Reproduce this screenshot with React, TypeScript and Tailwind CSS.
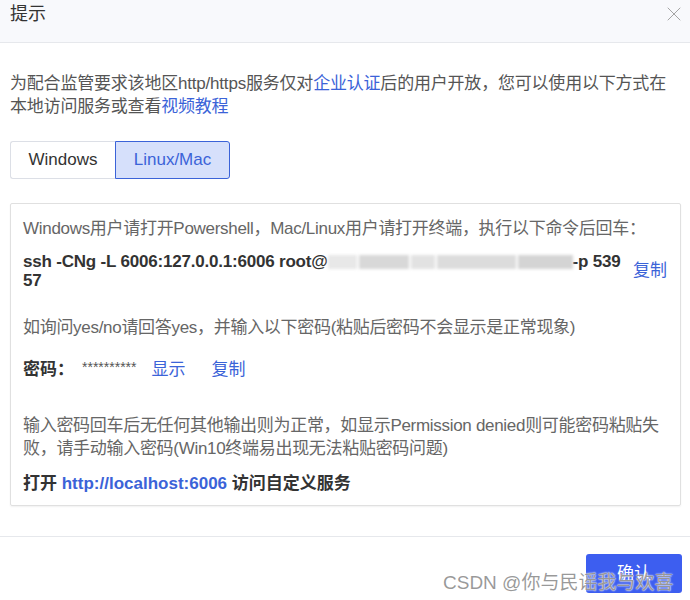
import { X } from 'lucide-react';

const font = { fontFamily: '"Liberation Sans", "Noto Sans CJK SC", sans-serif' };

export default function App() {
  return (
    <div className="relative w-[690px] h-[600px] bg-white overflow-hidden" style={font}>
      {/* Header */}
      <div className="h-[43px] bg-[#f8f9fc] border-b border-[#e6e8ec] flex items-center justify-between pl-[10px] pr-[4px]">
        <span className="text-[18px] text-[#333] -mt-[14px]">提示</span>
        <X className="w-[24px] h-[24px] text-[#9a9a9a] -mt-[14px]" strokeWidth={0.9} />
      </div>

      {/* Body */}
      <div className="px-[10px] pt-[29px]">
        <p className="text-[17px] leading-[23px] text-[#555] tracking-[-0.2px]">
          为配合监管要求该地区http/https服务仅对<span className="text-[#3b63d8]">企业认证</span>
          后的用户开放，您可以使用以下方式在本地访问服务或查看<span className="text-[#3b63d8]">视频教程</span>
        </p>

        <div className="mt-[23px] flex text-[17px]">
          <button className="h-[38px] w-[105px] border border-[#dcdfe6] border-r-0 rounded-l-[3px] text-[#333] bg-white">
            Windows
          </button>
          <button className="h-[38px] w-[115px] border border-[#3b63d8] rounded-r-[3px] text-[#3b63d8] bg-[#d6e0fb]">
            Linux/Mac
          </button>
        </div>

        {/* Card */}
        <div className="mt-[24px] w-[671px] border border-[#e0e0e0] rounded-[2px] shadow-[0_1px_2px_rgba(0,0,0,0.06)] pl-[12px] pr-[12px] pt-[13px] pb-[10px]">
          <p className="text-[17px] leading-[23px] text-[#666] tracking-[-0.3px]">
            Windows用户请打开Powershell，Mac/Linux用户请打开终端，执行以下命令后回车：
          </p>

          <div className="mt-[12px] flex items-center">
            <div className="flex-1 text-[17px] leading-[19px] font-bold text-[#333] tracking-[-0.2px]">
              <div className="flex items-center whitespace-nowrap">
                <span>ssh -CNg -L 6006:127.0.0.1:6006 root@</span>
                <span className="inline-flex h-[14px] w-[245px] gap-[2px] blur-[1.5px]">
                  <span className="w-[30px] bg-[#e8e8e8]" />
                  <span className="w-[50px] bg-[#d8d8d8]" />
                  <span className="w-[25px] bg-[#e2e2e2]" />
                  <span className="w-[80px] bg-[#dcdcdc]" />
                  <span className="w-[55px] bg-[#d4d4d4]" />
                </span>
                <span>-p 539</span>
              </div>
              <div>57</div>
            </div>
            <span className="shrink-0 text-[17px] text-[#3b63d8] ml-[10px] mr-[1px]">复制</span>
          </div>

          <p className="mt-[26px] text-[17px] leading-[23px] text-[#666] tracking-[-0.3px]">
            如询问yes/no请回答yes，并输入以下密码(粘贴后密码不会显示是正常现象)
          </p>

          <div className="mt-[19px] flex items-center text-[17px] leading-[23px]">
            <span className="font-bold text-[#333]">密码：</span>
            <span className="ml-[8px] text-[14px] text-[#555] -mt-[4px]">**********</span>
            <span className="ml-[15px] text-[#3b63d8]">显示</span>
            <span className="ml-[26px] text-[#3b63d8]">复制</span>
          </div>

          <p className="mt-[33px] text-[17px] leading-[23px] text-[#666] tracking-[-0.3px]">
            输入密码回车后无任何其他输出则为正常，如显示Permission denied则可能密码粘贴失败，请手动输入密码(Win10终端易出现无法粘贴密码问题)
          </p>

          <p className="mt-[12px] text-[17px] leading-[23px] font-bold text-[#333]">
            打开 <span className="text-[#3b63d8]">http://localhost:6006</span> 访问自定义服务
          </p>
        </div>
      </div>

      {/* Footer */}
      <div className="mt-[30px] border-t border-[#e6e8ec] flex justify-end pr-[8px] pt-[17px]">
        <button className="h-[39px] w-[96px] rounded-[3px] bg-[#3d5ef0] text-white text-[17px]">确认</button>
      </div>

      {/* Watermark */}
      <div
        className="absolute left-[443px] top-[569px] text-[19px] text-[rgba(120,120,120,0.75)] whitespace-nowrap"
        style={{ textShadow: '0 0 1px #fff, 0 0 2px #fff' }}
      >
        CSDN @你与民谣我与欢喜
      </div>
    </div>
  );
}
